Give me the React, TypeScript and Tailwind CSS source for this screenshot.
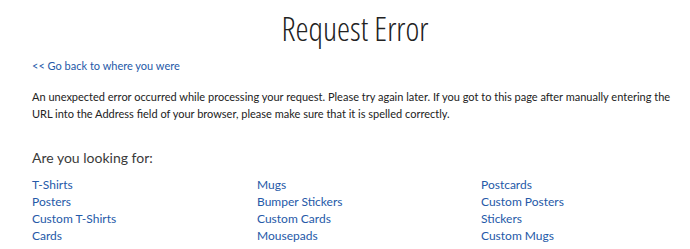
import React from 'react';

const links = [
  ['T-Shirts', 'Mugs', 'Postcards'],
  ['Posters', 'Bumper Stickers', 'Custom Posters'],
  ['Custom T-Shirts', 'Custom Cards', 'Stickers'],
  ['Cards', 'Mousepads', 'Custom Mugs'],
];

export default function App() {
  return (
    <div className="min-h-screen bg-white pl-8 pr-3 font-['Lato',sans-serif] text-[#222]">
      {/* Title */}
      <h1 className="pt-[9px] text-center font-['Open_Sans',sans-serif] text-[33px] font-light leading-[40px] text-[#222] [font-stretch:80%]">
        Request Error
      </h1>

      <a href="#" className="mt-[8px] block text-[11px] leading-[17px] text-[#2559a8]">
        &lt;&lt; Go back to where you were
      </a>

      <p className="mt-[14px] text-[11px] leading-[17px] text-[#222]">
        An unexpected error occurred while processing your request. Please try again later. If you got to this page after manually entering the URL into the Address field of your browser, please make sure that it is spelled correctly.
      </p>

      {/* Suggestions */}
      <h2 className="mt-[26px] text-[14px] font-normal leading-[20px] text-[#3a3a3a]">Are you looking for:</h2>
      <div className="mt-[8px] grid grid-cols-[225px_224px_1fr]">
        {links.flat().map((label) => (
          <a key={label} href="#" className="text-[12px] leading-[17px] text-[#2559a8]">
            {label}
          </a>
        ))}
      </div>
    </div>
  );
}
